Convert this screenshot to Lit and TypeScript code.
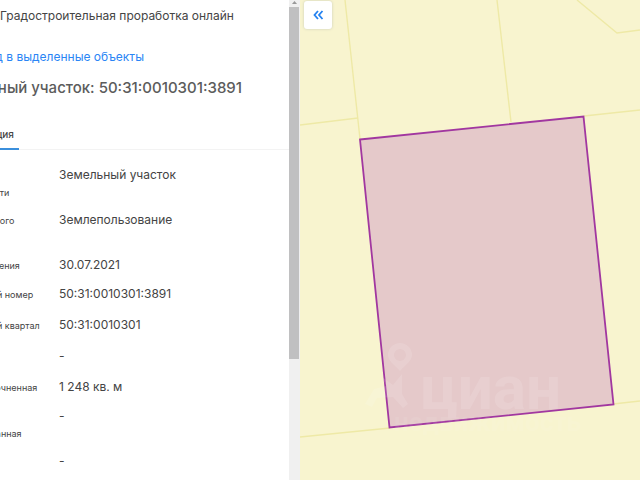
import { LitElement, html, css, svg } from "lit";
import { customElement } from "lit/decorators.js";

interface Row {
  label: string;
  value: string;
  size: string;
}

const rows: Row[] = [
  { label: "Вид объекта недвижимости", value: "Земельный участок", size: "tall" },
  { label: "Вид земельного участка", value: "Землепользование", size: "tall" },
  { label: "Дата присвоения", value: "30.07.2021", size: "short" },
  { label: "Кадастровый номер", value: "50:31:0010301:3891", size: "" },
  { label: "Кадастровый квартал", value: "50:31:0010301", size: "" },
  { label: "Адрес", value: "-", size: "" },
  { label: "Площадь уточненная", value: "1 248 кв. м", size: "short" },
  { label: "Площадь декларированная", value: "-", size: "tall" },
  { label: "Статус", value: "-", size: "" },
];

@customElement("parcel-card")
export class ParcelCard extends LitElement {
  static styles = css`
    :host {
      display: block;
      overflow: hidden;
      background: #fff;
      color: #444;
      font-family: Inter, "Open Sans", sans-serif;
    }
    .sheet {
      margin-left: -60px;
      white-space: nowrap;
    }
    .app {
      margin: 0;
      padding: 6px 0 0 60px;
      font-size: 12px;
      line-height: 20px;
      font-weight: 400;
    }
    .back {
      display: block;
      width: 204px;
      margin-top: 21px;
      text-align: right;
      color: #2a85f5;
      font-size: 12px;
      line-height: 20px;
      text-decoration: none;
    }
    .title {
      width: 302px;
      margin: 9px 0 0;
      text-align: right;
      font-size: 15px;
      line-height: 24px;
      font-weight: 500;
      color: #5c5c5c;
    }
    .tabs {
      display: flex;
      margin-top: 24px;
      border-bottom: 1px solid #f3f3f3;
    }
    .tab {
      width: 79px;
      height: 26px;
      margin-bottom: -1px;
      padding: 0 5px 4px 0;
      border: 0;
      border-bottom: 2px solid #3b8fdc;
      background: none;
      color: #444;
      font: 500 10px/20px Inter, sans-serif;
      text-align: right;
    }
    table {
      margin-top: 15px;
      border-collapse: collapse;
      table-layout: fixed;
      width: 100%;
    }
    th,
    td {
      padding: 0;
      height: 31px;
      vertical-align: top;
      text-align: left;
      font-weight: 400;
      line-height: 20px;
    }
    th {
      width: 119px;
      font-size: 9px;
      line-height: 17px;
      padding-top: 2px;
      height: 29px;
    }
    .label {
      display: block;
      width: 108px;
      padding-left: 3px;
      box-sizing: border-box;
      white-space: normal;
    }
    td {
      font-size: 12px;
    }
    .tall td {
      height: 45px;
    }
    .tall th {
      height: 43px;
    }
    .short td {
      height: 29px;
    }
    .short th {
      height: 27px;
    }
  `;

  render() {
    return html`
      <div class="sheet">
        <p class="app">Градостроительная проработка онлайн</p>
        <a class="back" href="#">Переход в выделенные объекты</a>
        <h1 class="title">Земельный участок: 50:31:0010301:3891</h1>
        <div class="tabs" role="tablist">
          <button class="tab" role="tab" aria-selected="true">Информация</button>
        </div>
        <table>
          <tbody>
            ${rows.map(
              (r) => html`<tr class=${r.size}>
                <th scope="row"><span class="label">${r.label}</span></th>
                <td>${r.value}</td>
              </tr>`
            )}
          </tbody>
        </table>
      </div>
    `;
  }
}

const borders = [
  "M345 0L360 139",
  "M300 125L358 118",
  "M497 0L511 122",
  "M577 0L617 33L640 30",
  "M584 116L640 110",
  "M300 437L390 428",
  "M613 404L640 401",
];

@customElement("parcel-map")
export class ParcelMap extends LitElement {
  static styles = css`
    :host {
      display: block;
      position: relative;
      overflow: hidden;
      background: #f8f4cf;
    }
    .map {
      display: block;
      width: 100%;
      height: 100%;
    }
    .border {
      fill: none;
      stroke: #eee9a6;
      stroke-width: 1.4;
    }
    .parcel {
      fill: #e5c9ca;
      stroke: #a137a0;
      stroke-width: 1.8;
    }
    .mark {
      fill: #fff;
      opacity: 0.12;
      font-family: Roboto, sans-serif;
      font-weight: 700;
    }
    .brand {
      font-size: 62px;
    }
    .sub {
      font-size: 26px;
      opacity: 0.6;
    }
    .collapse {
      position: absolute;
      top: 1px;
      left: 4px;
      display: grid;
      place-items: center;
      width: 28px;
      height: 28px;
      padding: 0;
      border: 0;
      border-radius: 3px;
      background: #fff;
      box-shadow: 0 0 3px #c9cdb8;
    }
    .collapse svg {
      width: 12px;
      height: 12px;
      fill: none;
      stroke: #2482f0;
      stroke-width: 1.8;
    }
  `;

  render() {
    return html`
      <svg class="map" viewBox="300 0 340 480" preserveAspectRatio="xMinYMin slice">
        ${borders.map((d) => svg`<path class="border" d=${d} />`)}
        <path class="parcel" d="M360 139.500L583.500 116.500L613.500 404.500L389.500 427.500Z" />
        <g class="mark">
          <path
            fill-rule="evenodd"
            d="M400 343a12 12 0 0 1 12 12c0 6-6 9-12 16c-6-7-12-10-12-16a12 12 0 0 1 12-12zm0 6a6 6 0 1 0 0 12a6 6 0 1 0 0-12z"
          />
          <path d="M382 377l11 8l9-11v20l6 10l-5 4l-10-11l-16 1l-5 9l-7-3l9-15l12-3z" />
          <text class="brand" x="420" y="409">циан</text>
          <text class="sub" x="394" y="431">недвижимость</text>
        </g>
      </svg>
      <button class="collapse" aria-label="Свернуть панель">
        <svg viewBox="0 0 12 12"><path d="M6 2L2.500 6L6 10M10.500 2L7 6L10.500 10" /></svg>
      </button>
    `;
  }
}

@customElement("app-root")
export class AppRoot extends LitElement {
  static styles = css`
    :host {
      display: grid;
      grid-template-columns: minmax(0, 289fr) 11px minmax(0, 340fr);
      height: 100vh;
      overflow: hidden;
    }
    .scroll {
      display: grid;
      grid-template-rows: 7px 352fr 121fr;
      background: #f0f0f0;
    }
    .arrow {
      width: 5px;
      height: 3px;
      margin: 1px auto 0;
      background: #999;
      clip-path: polygon(50% 0, 100% 100%, 0 100%);
    }
    .thumb {
      width: 10px;
      background: #c0c0c1;
    }
  `;

  render() {
    return html`
      <parcel-card></parcel-card>
      <div class="scroll">
        <div class="arrow"></div>
        <div class="thumb"></div>
      </div>
      <parcel-map></parcel-map>
    `;
  }
}
